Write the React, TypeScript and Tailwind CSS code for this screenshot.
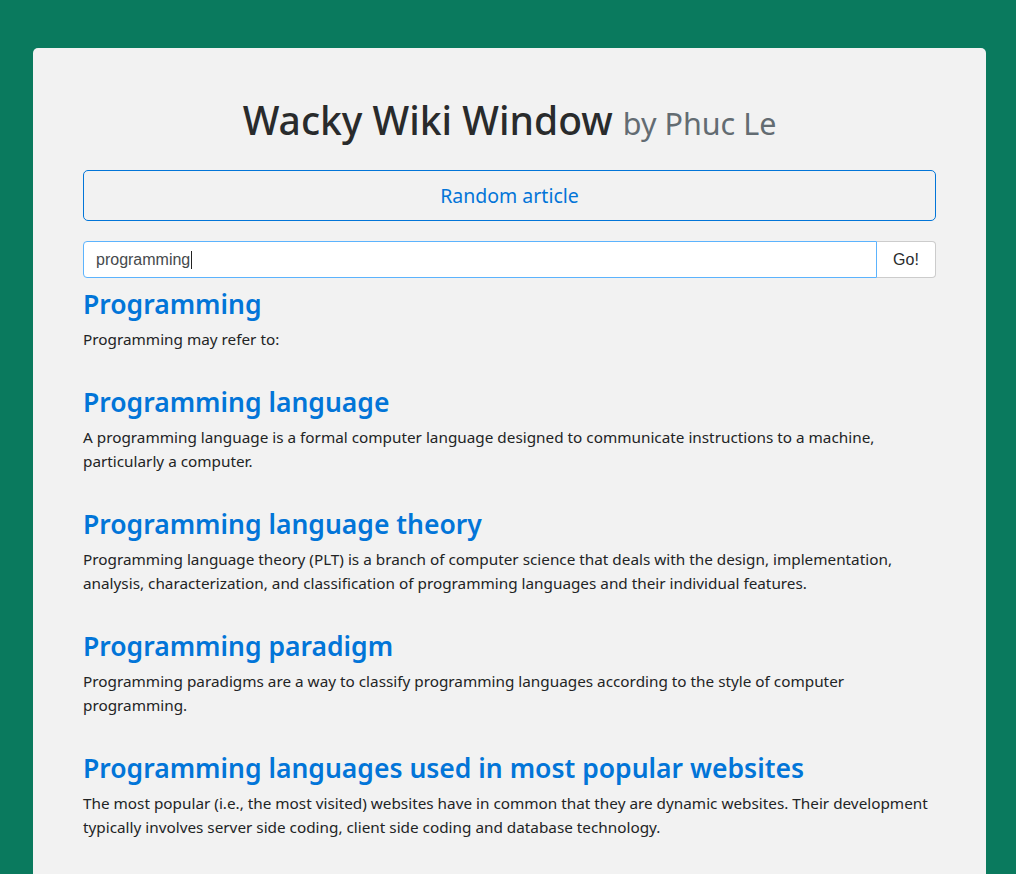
import React from "react";

const results = [
  { title: "Programming", text: "Programming may refer to:" },
  {
    title: "Programming language",
    text: "A programming language is a formal computer language designed to communicate instructions to a machine, particularly a computer.",
  },
  {
    title: "Programming language theory",
    text: "Programming language theory (PLT) is a branch of computer science that deals with the design, implementation, analysis, characterization, and classification of programming languages and their individual features.",
  },
  {
    title: "Programming paradigm",
    text: "Programming paradigms are a way to classify programming languages according to the style of computer programming.",
  },
  {
    title: "Programming languages used in most popular websites",
    text: "The most popular (i.e., the most visited) websites have in common that they are dynamic websites. Their development typically involves server side coding, client side coding and database technology.",
  },
];

export default function App() {
  return (
    <div className="min-h-[874px] bg-[#0a7a5e] pl-[33px] pr-[30px] pt-[48px] font-['Noto_Sans',sans-serif] text-[#292b2c]">
      <div className="min-h-[826px] rounded-t-[5px] bg-[#f2f2f2] px-[50px] pt-[44px]">
        <h1 className="text-center text-[39px] leading-[56px] font-medium text-[#292b2c]">
          Wacky Wiki Window{" "}
          <span className="text-[30.5px] font-normal text-[#636c72]">by Phuc Le</span>
        </h1>
        <button className="mt-[19px] block h-[51px] w-full rounded-[5px] border border-[#0275d8] text-[19.5px] text-[#0275d8]">
          Random article
        </button>
        <div className="mt-[20px] flex h-[37px]">
          <div className="flex flex-1 items-center rounded-l-[4px] border border-[#5cb3fd] bg-white pl-[12px] font-['Liberation_Sans',sans-serif] text-[16px] text-[#464a4c]">
            programming<span className="ml-[1px] inline-block h-[18px] w-[1px] bg-[#222]" />
          </div>
          <div className="flex w-[59px] items-center justify-center rounded-r-[4px] border border-l-0 border-[#cccccc] bg-white font-['Liberation_Sans',sans-serif] text-[16px] text-[#292b2c]">
            Go!
          </div>
        </div>
        <div className="mt-[11px]">
          {results.map((r) => (
            <div key={r.title} className="mb-[36px]">
              <h2 className="mb-[7px] text-[26.5px] leading-[31px] font-semibold text-[#0275d8]">{r.title}</h2>
              <p className="text-[15.3px] leading-[24px] text-[#222425]">{r.text}</p>
            </div>
          ))}
        </div>
      </div>
    </div>
  );
}
